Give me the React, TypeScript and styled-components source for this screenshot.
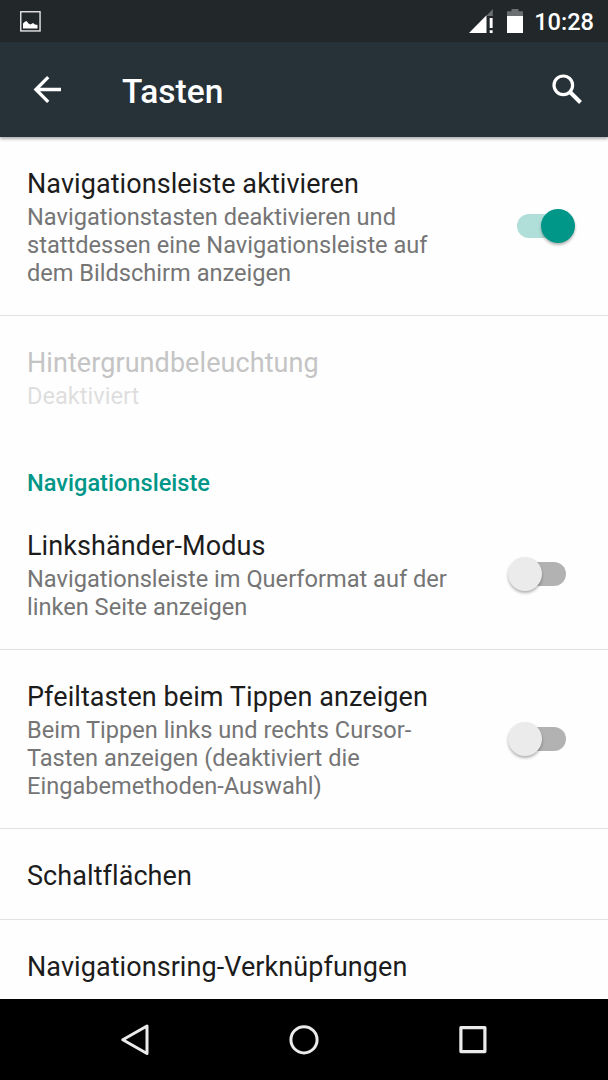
import React from "react";
import styled, { createGlobalStyle } from "styled-components";

const GlobalStyle = createGlobalStyle`
  body { margin: 0; background: #fff; font-family: Roboto, "Noto Sans", sans-serif; }
  * { box-sizing: border-box; }
`;

const Screen = styled.main`
  display: flex;
  flex-direction: column;
  width: 608px;
  height: 1080px;
  overflow: hidden;
  background: #fefefe;
`;

const StatusBar = styled.header`
  flex: none;
  display: flex;
  align-items: center;
  height: 42px;
  padding: 0 14px 0 20px;
  background: #22272a;
  color: #fff;
`;

const StatusIcons = styled.div`
  display: flex;
  align-items: center;
  gap: 12px;
  margin-left: auto;
`;

const Clock = styled.time`
  margin: 2px 0 0 -2px;
  font-size: 23.6px;
  line-height: 28px;
  font-weight: 500;
`;

const Toolbar = styled.div`
  flex: none;
  display: flex;
  align-items: center;
  height: 95px;
  padding: 0 25px 0 33px;
  background: #263238;
  color: #fff;
  box-shadow: 0 2px 3px rgba(0, 0, 0, 0.32);
  z-index: 1;
`;

const ScreenTitle = styled.h1`
  flex: 1;
  margin: 4px 0 0 60px;
  font-size: 33.5px;
  line-height: 40px;
  font-weight: 500;
`;

const List = styled.div`
  flex: 1;
  min-height: 0;
  overflow: hidden;
`;

const Row = styled.section<{ $divider?: boolean }>`
  display: flex;
  align-items: center;
  justify-content: space-between;
  padding: 31px 27px 27px;
  border-bottom: ${(p) => (p.$divider ? "1px solid #e2e2e2" : "0")};
`;

const RowText = styled.div`
  white-space: nowrap;
`;

const RowTitle = styled.h2<{ $disabled?: boolean }>`
  margin: 0;
  font-size: 27px;
  line-height: 32px;
  letter-spacing: 0.07px;
  font-weight: 400;
  color: ${(p) => (p.$disabled ? "#c4c4c4" : "#1c1c1c")};
`;

const SummaryBlock = styled.div`
  padding: 3px 0 1px;
`;

const Summary = styled.p<{ $disabled?: boolean }>`
  margin: 0;
  font-size: 23.6px;
  line-height: 28px;
  color: ${(p) => (p.$disabled ? "#dedede" : "#757575")};
`;

const Category = styled.h3`
  margin: 0;
  height: 61px;
  padding-top: 31px;
  padding-left: 27px;
  font-size: 23.6px;
  line-height: 28px;
  font-weight: 500;
  color: #009688;
`;

const Track = styled.div<{ $on?: boolean }>`
  flex: none;
  display: flex;
  align-items: center;
  justify-content: ${(p) => (p.$on ? "flex-end" : "flex-start")};
  width: ${(p) => (p.$on ? "52px" : "49px")};
  height: 24px;
  margin: 0 ${(p) => (p.$on ? "12px" : "15px")} 5px 0;
  border-radius: 12px;
  background: ${(p) => (p.$on ? "#b0dfda" : "#b2b2b2")};
`;

const Thumb = styled.div<{ $on?: boolean }>`
  flex: none;
  width: 34px;
  height: 34px;
  margin: ${(p) => (p.$on ? "0 -6px 0 0" : "0 0 0 -9px")};
  border-radius: 50%;
  background: ${(p) => (p.$on ? "#009688" : "#ebebeb")};
  box-shadow: 0 2px 3px rgba(0, 0, 0, 0.3);
`;

const NavBar = styled.nav`
  flex: none;
  display: flex;
  align-items: center;
  justify-content: space-between;
  height: 81px;
  padding: 0 120px;
  background: #000;
`;

const Switch = ({ on }: { on?: boolean }) => (
  <Track $on={on} role="switch" aria-checked={!!on}>
    <Thumb $on={on} />
  </Track>
);

type PreferenceProps = {
  title: string;
  lines?: string[];
  disabled?: boolean;
  divider?: boolean;
  toggle?: "on" | "off";
};

const Preference = ({ title, lines, disabled, divider, toggle }: PreferenceProps) => (
  <Row $divider={divider}>
    <RowText>
      <RowTitle $disabled={disabled}>{title}</RowTitle>
      {lines && (
        <SummaryBlock>
          {lines.map((line) => (
            <Summary key={line} $disabled={disabled}>{line}</Summary>
          ))}
        </SummaryBlock>
      )}
    </RowText>
    {toggle && <Switch on={toggle === "on"} />}
  </Row>
);

const PictureIcon = () => (
  <svg width="21" height="21" viewBox="0 0 21 21">
    <rect x=".75" y=".75" width="19.3" height="19.2" fill="none" stroke="#e6e6e6" strokeWidth="1.4" />
    <path d="M3 17.500v-5l1.500-1.500 2-1 2 2.500 2 1 2.500-1.500 2 1.500 2.500.5v3.500z" fill="#fff" />
  </svg>
);

const SignalIcon = () => (
  <svg width="26" height="26" viewBox="0 0 26 26">
    <path d="M18.300 8L24.800 1v7z" fill="#6c6f71" />
    <path d="M1 25L18.500 7.200V25z" fill="#fff" />
    <path d="M21.700 10h2.900v10h-2.900zM21.700 22.200h2.900v2.800h-2.900z" fill="#fff" />
  </svg>
);

const BatteryIcon = () => (
  <svg width="18" height="26" viewBox="0 0 18 26">
    <path d="M1 8V3.200h4.500V1h7v2.200H17V8z" fill="#6c6f71" />
    <path d="M1 8h16v17H1z" fill="#fff" />
  </svg>
);

const BackArrow = () => (
  <svg width="29" height="28" viewBox="0 0 29 28" fill="none" stroke="#fff" strokeWidth="3.300">
    <path d="M28 13.500H3.500M15.200 1.200L2.900 13.500l12.300 12.300" />
  </svg>
);

const SearchIcon = () => (
  <svg width="31" height="31" viewBox="0 0 31 31" fill="none" stroke="#fff">
    <circle cx="11.300" cy="11.300" r="9.300" strokeWidth="3.200" />
    <path d="M18.500 18.500l10 10" strokeWidth="4" />
  </svg>
);

export default function App() {
  return (
    <>
      <GlobalStyle />
      <Screen>
        <StatusBar>
          <PictureIcon />
          <StatusIcons>
            <SignalIcon />
            <BatteryIcon />
            <Clock>10:28</Clock>
          </StatusIcons>
        </StatusBar>
        <Toolbar>
          <BackArrow />
          <ScreenTitle>Tasten</ScreenTitle>
          <SearchIcon />
        </Toolbar>
        <List>
          <Preference
            title="Navigationsleiste aktivieren"
            lines={[
              "Navigationstasten deaktivieren und",
              "stattdessen eine Navigationsleiste auf",
              "dem Bildschirm anzeigen",
            ]}
            toggle="on"
            divider
          />
          <Preference title="Hintergrundbeleuchtung" lines={["Deaktiviert"]} disabled />
          <Category>Navigationsleiste</Category>
          <Preference
            title="Linkshänder-Modus"
            lines={["Navigationsleiste im Querformat auf der", "linken Seite anzeigen"]}
            toggle="off"
            divider
          />
          <Preference
            title="Pfeiltasten beim Tippen anzeigen"
            lines={[
              "Beim Tippen links und rechts Cursor-",
              "Tasten anzeigen (deaktiviert die",
              "Eingabemethoden-Auswahl)",
            ]}
            toggle="off"
            divider
          />
          <Preference title="Schaltflächen" divider />
          <Preference title="Navigationsring-Verknüpfungen" />
        </List>
        <NavBar>
          <svg width="30" height="32" viewBox="0 0 30 32" fill="none" stroke="#ebebeb" strokeWidth="3" strokeLinejoin="round">
            <path d="M27 2v27.500L2.800 15.700z" />
          </svg>
          <svg width="30" height="30" viewBox="0 0 30 30" fill="none" stroke="#ebebeb" strokeWidth="3">
            <circle cx="15" cy="14.800" r="13.100" />
          </svg>
          <svg width="30" height="30" viewBox="0 0 30 30" fill="none" stroke="#ebebeb" strokeWidth="3.200" strokeLinejoin="round">
            <rect x="2.900" y="2.600" width="24" height="24" />
          </svg>
        </NavBar>
      </Screen>
    </>
  );
}
